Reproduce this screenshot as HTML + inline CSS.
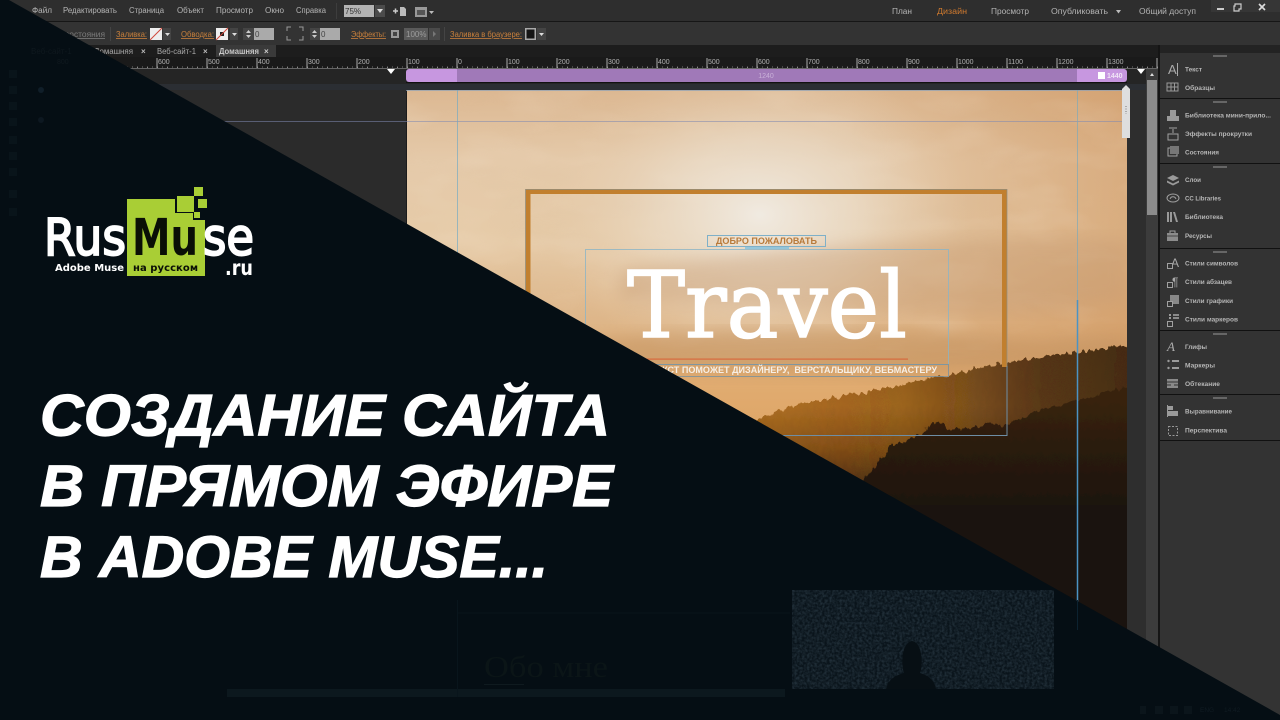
<!DOCTYPE html>
<html lang="ru"><head><meta charset="utf-8"><title>RusMuse</title>
<style>
html,body{margin:0;padding:0;background:#050e14;width:1280px;height:720px;overflow:hidden}
svg{display:block;position:absolute;left:0;top:0}
text{font-family:"Liberation Sans","Noto Sans CJK SC",sans-serif}
.m{font-size:8px;fill:#b4b4b4}
.o{font-size:8px;fill:#c9803c;text-decoration:underline}
.r{font-size:7px;fill:#b0b0b0}
.t{font-size:8px;fill:#a8a8a8}
.p{font-size:6.6px;font-weight:bold;fill:#b6b6b6}
.i{fill:#9a9a9a}
.s{fill:none;stroke:#a0a0a0;stroke-width:1}
</style></head><body>
<svg width="1280" height="720" viewBox="0 0 1280 720" xmlns="http://www.w3.org/2000/svg">
<defs>
<linearGradient id="sky" x1="0" y1="0" x2="0" y2="1">
<stop offset="0" stop-color="#dcb892"/><stop offset=".2" stop-color="#e5caaa"/><stop offset=".42" stop-color="#e6cba8"/><stop offset=".62" stop-color="#dfb88c"/><stop offset=".82" stop-color="#e0ac72"/><stop offset="1" stop-color="#dba05c"/>
</linearGradient>
<radialGradient id="sun" cx="760" cy="215" r="210" gradientUnits="userSpaceOnUse" gradientTransform="translate(760 215) scale(1 .75) translate(-760 -215)">
<stop offset="0" stop-color="#f1ece4" stop-opacity=".95"/><stop offset=".5" stop-color="#ece0cf" stop-opacity=".55"/><stop offset="1" stop-color="#e6cdb0" stop-opacity="0"/>
</radialGradient>
<linearGradient id="rt" x1="0" y1="0" x2="1" y2="0">
<stop offset="0" stop-color="#c98d55" stop-opacity="0"/><stop offset="1" stop-color="#cc8e54" stop-opacity=".5"/>
</linearGradient>
<linearGradient id="glow" gradientUnits="userSpaceOnUse" x1="0" y1="345" x2="0" y2="480">
<stop offset="0" stop-color="#9c6220"/><stop offset=".45" stop-color="#ad6e22"/><stop offset=".75" stop-color="#8a5519"/><stop offset="1" stop-color="#5a3715"/>
</linearGradient>
<linearGradient id="fade" gradientUnits="userSpaceOnUse" x1="780" y1="0" x2="1127" y2="0">
<stop offset="0" stop-color="#3a2411" stop-opacity="0"/><stop offset=".35" stop-color="#3a2411" stop-opacity=".15"/><stop offset=".75" stop-color="#33200f" stop-opacity=".7"/><stop offset="1" stop-color="#2e1d0f" stop-opacity=".8"/>
</linearGradient>
<linearGradient id="dark" gradientUnits="userSpaceOnUse" x1="0" y1="400" x2="0" y2="520">
<stop offset="0" stop-color="#38230f"/><stop offset=".4" stop-color="#2a1b0f"/><stop offset="1" stop-color="#1a130f"/>
</linearGradient>
<filter id="jag" x="-5%" y="-5%" width="110%" height="110%"><feTurbulence type="fractalNoise" baseFrequency=".22 .1" numOctaves="2" seed="4"/><feDisplacementMap in="SourceGraphic" scale="9" xChannelSelector="R" yChannelSelector="G"/></filter>
<filter id="cl" x="0" y="0" width="100%" height="100%"><feTurbulence type="fractalNoise" baseFrequency=".01 .03" numOctaves="3" seed="8"/><feColorMatrix values="0 0 0 0 .62  0 0 0 0 .43  0 0 0 0 .27  1.6 0 0 0 -.72"/></filter>
<filter id="cw" x="0" y="0" width="100%" height="100%"><feTurbulence type="fractalNoise" baseFrequency=".012 .03" numOctaves="3" seed="21"/><feColorMatrix values="0 0 0 0 .95  0 0 0 0 .86  0 0 0 0 .74  1.6 0 0 0 -.78"/></filter>
<filter id="gr" x="0" y="0" width="100%" height="100%"><feTurbulence type="fractalNoise" baseFrequency=".4" numOctaves="2" seed="3"/><feColorMatrix values="0 0 0 0 .09  0 0 0 0 .15  0 0 0 0 .2  2 0 0 0 -.6"/></filter>
<filter id="b3"><feGaussianBlur stdDeviation="3"/></filter>
<filter id="b8"><feGaussianBlur stdDeviation="8"/></filter>
<clipPath id="img"><rect x="406" y="90" width="721" height="560"/></clipPath>
</defs>

<!-- app chrome -->
<rect width="1280" height="720" fill="#2b2b2b"/>
<rect width="1280" height="21" fill="#2e2e2e"/>
<rect y="21" width="1280" height="1" fill="#161616"/>
<rect y="22" width="1280" height="23" fill="#333"/>
<rect y="45" width="1280" height="12" fill="#1d1d1d"/>
<rect y="57" width="1160" height="12" fill="#1a1a1a"/>
<rect y="69" width="1160" height="15" fill="#252525"/>
<rect y="84" width="1146" height="6" fill="#2b2e33"/>

<!-- menu -->
<g class="m">
<text x="32" y="13" class="m" textLength="20" lengthAdjust="spacingAndGlyphs">Файл</text>
<text x="63" y="13" class="m" textLength="54" lengthAdjust="spacingAndGlyphs">Редактировать</text>
<text x="129" y="13" class="m" textLength="35" lengthAdjust="spacingAndGlyphs">Страница</text>
<text x="177" y="13" class="m" textLength="27" lengthAdjust="spacingAndGlyphs">Объект</text>
<text x="216" y="13" class="m" textLength="37" lengthAdjust="spacingAndGlyphs">Просмотр</text>
<text x="265" y="13" class="m" textLength="19" lengthAdjust="spacingAndGlyphs">Окно</text>
<text x="296" y="13" class="m" textLength="30" lengthAdjust="spacingAndGlyphs">Справка</text>
</g>
<rect x="336" y="3" width="1" height="16" fill="#3d3d3d"/>
<rect x="344" y="5" width="30" height="12" fill="#b4b4b4"/>
<text x="345" y="14" font-size="8" fill="#333">75%</text>
<rect x="375" y="5" width="10" height="12" fill="#4b4b4b"/>
<path d="M377 9h6l-3 4z" fill="#ddd"/>
<path d="M393 11h5M395.500 8.500v5" stroke="#ccc" stroke-width="1.500"/><path d="M400 7h4l2 2v7h-6z" fill="#bbb"/>
<rect x="415" y="7" width="12" height="10" fill="#999"/><rect x="417" y="10" width="8" height="5" fill="#555"/><path d="M429 11h5l-2.500 3z" fill="#bbb"/>
<g class="m">
<text x="892" y="14" class="m" textLength="20" lengthAdjust="spacingAndGlyphs">План</text>
<text x="937" y="14" class="m" style="fill:#d07a2e" textLength="30" lengthAdjust="spacingAndGlyphs">Дизайн</text>
<text x="991" y="14" class="m" textLength="38" lengthAdjust="spacingAndGlyphs">Просмотр</text>
<text x="1051" y="14" class="m" textLength="57" lengthAdjust="spacingAndGlyphs">Опубликовать</text>
<text x="1139" y="14" class="m" textLength="57" lengthAdjust="spacingAndGlyphs">Общий доступ</text>
</g>
<path d="M1116 10h5l-2.500 3.500z" fill="#bbb"/>
<rect x="1211" y="0" width="69" height="12" fill="#363636"/>
<rect x="1217" y="8" width="7" height="2" fill="#ccc"/>
<path d="M1235 4h6v5h-2v2h-5v-5h1z" fill="none" stroke="#ccc" stroke-width="1.200"/>
<path d="M1259 4l6 6M1265 4l-6 6" stroke="#ddd" stroke-width="1.600"/>

<!-- toolbar -->
<text x="12" y="37" font-size="8" fill="#6f6f6f" textLength="38" lengthAdjust="spacingAndGlyphs">Страницы:</text>
<text x="65" y="37" font-size="8" fill="#7c7c7c" textLength="40" lengthAdjust="spacingAndGlyphs" text-decoration="underline">состояния</text>
<rect x="110" y="27" width="1" height="14" fill="#444"/>
<text x="116" y="37" class="o" textLength="31" lengthAdjust="spacingAndGlyphs">Заливка:</text>
<rect x="150" y="28" width="12" height="12" fill="#eee"/><path d="M150 40L162 28" stroke="#d0463a"/>
<rect x="163" y="28" width="8" height="12" fill="#444"/><path d="M165 33h5l-2.500 3z" fill="#ddd"/>
<text x="181" y="37" class="o" textLength="33" lengthAdjust="spacingAndGlyphs">Обводка:</text>
<rect x="216" y="28" width="12" height="12" fill="#eee"/><rect x="220" y="32" width="4" height="4" fill="#222"/><path d="M216 40L228 28" stroke="#d0463a"/>
<rect x="230" y="28" width="8" height="12" fill="#444"/><path d="M232 33h5l-2.500 3z" fill="#ddd"/>
<rect x="243" y="28" width="11" height="12" fill="#444"/><path d="M246 33l2.500-3 2.500 3zM246 35l2.500 3 2.500-3z" fill="#ccc"/>
<rect x="254" y="28" width="20" height="12" fill="#aaa"/><text x="255" y="37" font-size="8" fill="#444">0</text>
<path d="M287 36v4h4M299 40h4v-4M303 31v-4h-4M291 27h-4v4" fill="none" stroke="#9a9a9a"/>
<rect x="310" y="28" width="10" height="12" fill="#444"/><path d="M312 33l2.500-3 2.500 3zM312 35l2.500 3 2.500-3z" fill="#ccc"/>
<rect x="320" y="28" width="20" height="12" fill="#aaa"/><text x="321" y="37" font-size="8" fill="#444">0</text>
<text x="351" y="37" class="o" textLength="35" lengthAdjust="spacingAndGlyphs">Эффекты:</text>
<rect x="391" y="30" width="8" height="8" fill="#999"/><rect x="393" y="32" width="4" height="4" fill="#444"/>
<rect x="404" y="28" width="24" height="12" fill="#5a5a5a"/><text x="406" y="37" font-size="8" fill="#9c9c9c">100%</text>
<rect x="429" y="28" width="11" height="12" fill="#4a4a4a"/><path d="M433 31l3 3-3 3z" fill="#777"/>
<rect x="444" y="27" width="1" height="14" fill="#444"/>
<text x="450" y="37" class="o" textLength="72" lengthAdjust="spacingAndGlyphs">Заливка в браузере:</text>
<rect x="525" y="28" width="11" height="12" fill="#aaa"/><rect x="526.500" y="29.500" width="8" height="9" fill="#151515"/>
<rect x="537" y="28" width="9" height="12" fill="#444"/><path d="M539 33h5l-2.500 3z" fill="#ddd"/>

<!-- tabs -->
<rect x="216" y="45" width="60" height="12" fill="#3a3a3a"/>
<text x="94" y="54" class="t" textLength="39" lengthAdjust="spacingAndGlyphs">Домашняя</text>
<text x="141" y="54" font-size="8" font-weight="bold" fill="#bbb">×</text>
<text x="157" y="54" class="t" textLength="39" lengthAdjust="spacingAndGlyphs">Веб-сайт-1</text>
<text x="203" y="54" font-size="8" font-weight="bold" fill="#bbb">×</text>
<text x="219" y="54" font-size="8" font-weight="bold" fill="#c8c8c8" textLength="40" lengthAdjust="spacingAndGlyphs">Домашняя</text>
<text x="264" y="54" font-size="8" font-weight="bold" fill="#ccc">×</text>

<!-- ruler -->
<path d="M107 67.500H1158" stroke="#999" stroke-width="2" stroke-dasharray="1 9"/>
<path d="M107 67H1158" stroke="#777" stroke-dasharray="1 4"/>
<path d="M107 68.500H1158" stroke="#666"/>
<g stroke="#aaa"><path d="M157 58v10M207 58v10M257 58v10M307 58v10M357 58v10M407 58v10M457 58v10M507 58v10M557 58v10M607 58v10M657 58v10M707 58v10M757 58v10M807 58v10M857 58v10M907 58v10M957 58v10M1007 58v10M1057 58v10M1107 58v10M1157 58v10"/></g>
<g class="r">
<text class="r" x="158" y="64">600</text><text class="r" x="208" y="64">500</text><text class="r" x="258" y="64">400</text><text class="r" x="308" y="64">300</text><text class="r" x="358" y="64">200</text><text class="r" x="408" y="64">100</text><text class="r" x="458" y="64">0</text><text class="r" x="508" y="64">100</text><text class="r" x="558" y="64">200</text><text class="r" x="608" y="64">300</text><text class="r" x="658" y="64">400</text><text class="r" x="708" y="64">500</text><text class="r" x="758" y="64">600</text><text class="r" x="808" y="64">700</text><text class="r" x="858" y="64">800</text><text class="r" x="908" y="64">900</text><text class="r" x="958" y="64">1000</text><text class="r" x="1008" y="64">1100</text><text class="r" x="1058" y="64">1200</text><text class="r" x="1108" y="64">1300</text>
</g>
<path d="M387 69h8l-4 5z" fill="#fff"/><path d="M1137 69h8l-4 5z" fill="#fff"/>

<!-- purple bar -->
<rect x="406" y="69" width="721" height="13" rx="3" fill="#c797e0"/>
<rect x="457" y="69" width="620" height="13" fill="#a079b8"/>
<rect x="406" y="82" width="721" height="1" fill="#111"/>
<text x="766" y="78" text-anchor="middle" font-size="7" fill="#c9b0d8">1240</text>
<rect x="1098" y="72" width="7" height="7" fill="#fff"/>
<text x="1107" y="78" font-size="7" font-weight="bold" fill="#f0e4f6">1440</text>

<!-- hero image -->
<g clip-path="url(#img)">
<rect x="406" y="90" width="721" height="360" fill="url(#sky)"/>
<rect x="850" y="90" width="277" height="360" fill="url(#rt)"/>
<rect x="406" y="90" width="721" height="270" filter="url(#cl)" opacity=".14"/>
<rect x="406" y="90" width="721" height="260" filter="url(#cw)" opacity=".22"/>
<rect x="520" y="60" width="480" height="320" fill="url(#sun)"/>
<path d="M620 270C760 250 960 230 1127 240V300C1000 330 760 300 620 300Z" fill="#c59a72" opacity=".38" filter="url(#b8)"/>
<path d="M540 345C700 325 880 325 1040 340L1127 335V360L900 380L600 370Z" fill="#c0905e" opacity=".5" filter="url(#b8)"/>
<rect x="406" y="370" width="721" height="60" fill="#e2ab6e" opacity=".4" filter="url(#b8)"/>
<path d="M640 470L700 440 790 407 900 385 1000 364 1060 354 1135 345V520H640Z" fill="url(#glow)" filter="url(#jag)"/>
<path d="M640 470L700 440 790 407 900 385 1000 364 1060 354 1135 345V520H640Z" fill="url(#fade)" filter="url(#jag)"/>
<path d="M850 500L870 473 890 447 925 432 935 420 950 430 968 428 990 424 1005 425 1040 410 1135 385V660H850Z" fill="url(#dark)" filter="url(#jag)"/>
<rect x="750" y="505" width="377" height="150" fill="#1a130f"/>
</g>

<!-- guides / frames -->
<path d="M406.500 90V650" stroke="#1b1b1b"/>
<path d="M406 90.500H1146" stroke="#8fa3b8" stroke-opacity=".7"/>
<path d="M0 121.500H1146" stroke="#8089b0" stroke-opacity=".55"/>
<path d="M457.500 90V640" stroke="#6fa9c4" stroke-opacity=".65"/>
<path d="M1077.500 90V300" stroke="#7fa9b8" stroke-opacity=".7"/><path d="M1077.500 300V640" stroke="#4b93c4" stroke-width="1.500"/>
<path d="M528 435V191.500H1004.500V367" fill="none" stroke="#c17f2e" stroke-width="5"/>
<path d="M525.500 366V189.500H1007V366" fill="none" stroke="#8c8f86" stroke-opacity=".7"/>
<path d="M526 435.500H1007V366" fill="none" stroke="#6e8ea5"/>
<rect x="585.500" y="249.500" width="363" height="115" fill="none" stroke="#8bb4c6" stroke-opacity=".8"/>
<rect x="707.500" y="235.500" width="118" height="11" fill="none" stroke="#7fb0c8"/>
<rect x="745" y="247" width="44" height="2" fill="#7fc0e0" opacity=".8"/>
<text x="716" y="244" font-size="9" font-weight="bold" fill="#b87a3a" textLength="101" lengthAdjust="spacingAndGlyphs">ДОБРО ПОЖАЛОВАТЬ</text>
<text x="627" y="337" style="font-family:'DejaVu Serif','Liberation Serif',serif" font-size="92" fill="#fff" stroke="#fff" stroke-width="1.600" textLength="280" lengthAdjust="spacingAndGlyphs">Travel</text>
<rect x="640" y="358.500" width="268" height="1.200" fill="#d8693d"/>
<rect x="585.500" y="364.500" width="363" height="12" fill="none" stroke="#78909c" stroke-opacity=".8"/>
<text x="596" y="373" font-size="9.500" font-weight="bold" fill="#f6efe6" textLength="341" lengthAdjust="spacingAndGlyphs" xml:space="preserve">САЙТ РЫБАТЕКСТ ПОМОЖЕТ ДИЗАЙНЕРУ,  ВЕРСТАЛЬЩИКУ, ВЕБМАСТЕРУ</text>

<!-- page handle + scrollbar -->
<rect x="1127" y="90" width="20" height="630" fill="#2e2e2e"/>
<path d="M1122 89l4-4 4 4v49h-8z" fill="#dedede"/>
<path d="M1126 106v8" stroke="#777" stroke-dasharray="1 1.500"/>
<rect x="1146" y="69" width="12" height="651" fill="#3c3c3c"/>
<rect x="1147" y="80" width="10" height="135" fill="#8b8b8b"/>
<path d="M1150 76h4l-2-3z" fill="#ddd"/>
<rect x="1158" y="45" width="2" height="675" fill="#151515"/>

<!-- right panel -->
<rect x="1160" y="45" width="120" height="675" fill="#333"/>
<rect x="1160" y="45" width="120" height="8" fill="#232323"/>
<g fill="#111"><rect x="1160" y="98" width="120" height="1"/><rect x="1160" y="163" width="120" height="1"/><rect x="1160" y="248" width="120" height="1"/><rect x="1160" y="330" width="120" height="1"/><rect x="1160" y="394" width="120" height="1"/><rect x="1160" y="440" width="120" height="1"/></g>
<g fill="#666"><rect x="1213" y="55" width="14" height="2"/><rect x="1213" y="101" width="14" height="2"/><rect x="1213" y="166" width="14" height="2"/><rect x="1213" y="251" width="14" height="2"/><rect x="1213" y="333" width="14" height="2"/><rect x="1213" y="397" width="14" height="2"/></g>
<g>
<text class="p" x="1185" y="71.500" textLength="17" lengthAdjust="spacingAndGlyphs">Текст</text>
<text class="p" x="1185" y="90" textLength="30" lengthAdjust="spacingAndGlyphs">Образцы</text>
<text class="p" x="1185" y="117.500" textLength="86" lengthAdjust="spacingAndGlyphs">Библиотека мини-прило...</text>
<text class="p" x="1185" y="136" textLength="67" lengthAdjust="spacingAndGlyphs">Эффекты прокрутки</text>
<text class="p" x="1185" y="154.500" textLength="34" lengthAdjust="spacingAndGlyphs">Состояния</text>
<text class="p" x="1185" y="182" textLength="16" lengthAdjust="spacingAndGlyphs">Слои</text>
<text class="p" x="1185" y="200.500" textLength="36" lengthAdjust="spacingAndGlyphs">CC Libraries</text>
<text class="p" x="1185" y="219" textLength="38" lengthAdjust="spacingAndGlyphs">Библиотека</text>
<text class="p" x="1185" y="238" textLength="27" lengthAdjust="spacingAndGlyphs">Ресурсы</text>
<text class="p" x="1185" y="265.500" textLength="53" lengthAdjust="spacingAndGlyphs">Стили символов</text>
<text class="p" x="1185" y="284" textLength="47" lengthAdjust="spacingAndGlyphs">Стили абзацев</text>
<text class="p" x="1185" y="303" textLength="48" lengthAdjust="spacingAndGlyphs">Стили графики</text>
<text class="p" x="1185" y="321.500" textLength="53" lengthAdjust="spacingAndGlyphs">Стили маркеров</text>
<text class="p" x="1185" y="349" textLength="22" lengthAdjust="spacingAndGlyphs">Глифы</text>
<text class="p" x="1185" y="367.500" textLength="30" lengthAdjust="spacingAndGlyphs">Маркеры</text>
<text class="p" x="1185" y="386" textLength="35" lengthAdjust="spacingAndGlyphs">Обтекание</text>
<text class="p" x="1185" y="413.500" textLength="47" lengthAdjust="spacingAndGlyphs">Выравнивание</text>
<text class="p" x="1185" y="432.500" textLength="42" lengthAdjust="spacingAndGlyphs">Перспектива</text>
</g>
<!-- panel icons -->
<text x="1168" y="74" font-size="13" fill="#aaa">A</text><rect x="1177" y="63" width="1" height="13" fill="#aaa"/>
<rect x="1167" y="83" width="11" height="8" fill="none" stroke="#999"/><path d="M1167 87h11M1171 83v8M1174.500 83v8" stroke="#999"/>
<path d="M1167 121h12v-5h-3v-6h-6v6h-3z" class="i"/>
<path d="M1173 129v4M1169 128h8M1168 134h10v6h-10z" class="s"/>
<rect x="1168" y="148" width="9" height="8" class="s"/><rect x="1170" y="146" width="9" height="8" fill="#777"/>
<path d="M1173 175l6 3-6 3-6-3z" class="i"/><path d="M1167 180.500l6 3 6-3v2l-6 3-6-3z" class="i"/>
<ellipse cx="1173" cy="198" rx="6" ry="4" class="s"/><path d="M1170 199c1-3 5-3 6 0" class="s"/>
<path d="M1167 212h2v10h-2zM1170 212h2v10h-2zM1173 212l3 10h2l-3-10z" class="i"/>
<rect x="1167" y="233" width="11" height="8" fill="#8c8c8c"/><path d="M1170 233v-2h5v2" class="s"/><path d="M1167 236h11" stroke="#444"/>
<text x="1171" y="267" font-size="12" fill="#aaa">A</text><rect x="1167.500" y="263.500" width="5" height="5" class="s" style="fill:#333"/>
<text x="1172" y="286" font-size="12" fill="#aaa">¶</text><rect x="1167.500" y="282.500" width="5" height="5" class="s" style="fill:#333"/>
<rect x="1170" y="295" width="9" height="9" fill="#888"/><rect x="1167.500" y="301.500" width="5" height="5" class="s" style="fill:#333"/>
<path d="M1173 315h6M1173 318h6" stroke="#8a8a8a" stroke-width="2"/><rect x="1169" y="314" width="2" height="2" class="i"/><rect x="1169" y="317" width="2" height="2" class="i"/><rect x="1167.500" y="321.500" width="5" height="5" class="s" style="fill:#333"/>
<text x="1167" y="351" font-size="13" font-style="italic" fill="#aaa" style="font-family:'Liberation Serif',serif">A</text>
<path d="M1172 361h7M1172 368h7" stroke="#999" stroke-width="2"/><circle cx="1168.500" cy="361" r="1.200" class="i"/><circle cx="1168.500" cy="368" r="1.200" class="i"/>
<rect x="1167" y="379" width="11" height="9" fill="#8a8a8a"/><path d="M1167 382h11M1167 385h4M1174 385h4" stroke="#333"/>
<rect x="1168" y="406" width="5" height="4" class="i"/><rect x="1168" y="411" width="10" height="5" class="i"/><rect x="1167" y="405" width="1" height="12" class="i"/>
<rect x="1168.500" y="426.500" width="9" height="9" fill="none" stroke="#999" stroke-dasharray="2 1.500"/>

<!-- diagonal overlay -->
<path d="M9 0L1280 715V720H0V0Z" fill="#050e14"/>

<!-- faint items under the overlay -->
<g>
<rect x="227" y="689" width="558" height="8" fill="#0c181e"/>
<path d="M457 613H790" stroke="#09141a"/>
<rect x="457" y="600" width="1" height="97" fill="#09151c"/>
<rect x="1077" y="600" width="1" height="30" fill="#0c2230"/>
</g>
<rect x="792" y="590" width="262" height="99" fill="#0a141b"/>
<rect x="792" y="590" width="262" height="99" filter="url(#gr)" opacity=".3"/>
<path d="M886 689c3-12 12-14 18-16 -3-8 -3-30 8-32 11 2 11 24 8 32 6 2 14 5 16 16z" fill="#070f14"/>
<text x="484" y="677" font-size="31" fill="#0b1517" textLength="124" lengthAdjust="spacingAndGlyphs" style="font-family:'Liberation Serif',serif">Обо мне</text>
<rect x="484" y="684" width="40" height="1" fill="#0f1a1f"/>
<g fill="#09141a">
<text x="31" y="54" font-size="8" fill="#0f181e">Веб-сайт-1</text>
<text x="57" y="64" font-size="7" fill="#10191f">800</text>
<circle cx="41" cy="90" r="3" fill="#101e29"/><circle cx="41" cy="120" r="3" fill="#0d1821"/>
<rect x="9" y="70" width="8" height="8"/><rect x="9" y="86" width="8" height="8"/><rect x="9" y="102" width="8" height="8"/><rect x="9" y="118" width="8" height="8"/><rect x="9" y="136" width="8" height="8"/><rect x="9" y="152" width="8" height="8"/><rect x="9" y="168" width="8" height="8"/><rect x="9" y="190" width="8" height="8"/><rect x="9" y="208" width="8" height="8"/>
<text x="1200" y="712" font-size="6.500" fill="#101b22">ENG</text>
<text x="1224" y="712" font-size="6.500" fill="#101b22">14:42</text>
<rect x="1140" y="706" width="6" height="8" fill="#0b151b"/><rect x="1155" y="706" width="8" height="8" fill="#0b151b"/><rect x="1170" y="706" width="8" height="8" fill="#0b151b"/><rect x="1184" y="706" width="8" height="8" fill="#0b151b"/>
</g>

<!-- logo -->
<path d="M127 199H175V213H193V220H205V276H127Z" fill="#a9ce35"/>
<rect x="177" y="196" width="17" height="16" fill="#a9ce35"/>
<rect x="194" y="187" width="9" height="9" fill="#a9ce35"/>
<rect x="198" y="199" width="9" height="9" fill="#a9ce35"/>
<rect x="194" y="212" width="6" height="6" fill="#a9ce35"/>
<text x="44" y="255" font-size="51" fill="#fff" stroke="#fff" stroke-width="2" textLength="82" lengthAdjust="spacingAndGlyphs" style="font-family:'DejaVu Sans',sans-serif">Rus</text>
<text x="132" y="255" font-size="51" font-weight="bold" fill="#0a0f06" textLength="66" lengthAdjust="spacingAndGlyphs" style="font-family:'DejaVu Sans',sans-serif">Mu</text>
<text x="203" y="255" font-size="51" fill="#fff" stroke="#fff" stroke-width="2" textLength="51" lengthAdjust="spacingAndGlyphs" style="font-family:'DejaVu Sans',sans-serif">se</text>
<text x="55" y="271" font-size="10" font-weight="bold" fill="#fff" textLength="69" lengthAdjust="spacing" style="font-family:'DejaVu Sans',sans-serif">Adobe Muse</text>
<text x="133" y="271" font-size="10" font-weight="bold" fill="#0a0f06" textLength="65" lengthAdjust="spacing" style="font-family:'DejaVu Sans',sans-serif">на русском</text>
<text x="225" y="275" font-size="21" font-weight="bold" fill="#fff" textLength="28" lengthAdjust="spacingAndGlyphs" style="font-family:'DejaVu Sans',sans-serif">.ru</text>

<!-- headline -->
<g font-style="italic" font-weight="bold" font-size="58" fill="#fff" stroke="#fff" stroke-width="1.200">
<text x="40" y="435.500" textLength="570" lengthAdjust="spacingAndGlyphs">СОЗДАНИЕ САЙТА</text>
<text x="40" y="506" textLength="573" lengthAdjust="spacingAndGlyphs">В ПРЯМОМ ЭФИРЕ</text>
<text x="40" y="577" textLength="508" lengthAdjust="spacingAndGlyphs">В ADOBE MUSE...</text>
</g>
</svg>
</body></html>
